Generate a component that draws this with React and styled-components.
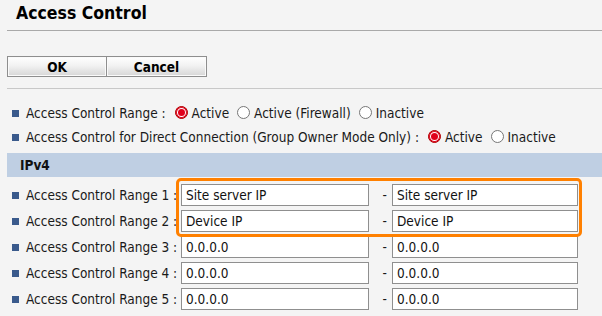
import React from "react";
import styled, { createGlobalStyle } from "styled-components";

const GlobalStyle = createGlobalStyle`
  body {
    margin: 0;
    background: #f4f4f4;
    font-family: "DejaVu Sans Condensed", "DejaVu Sans", sans-serif;
    color: #1a1a1a;
  }
`;

const ranges = [
  { from: "Site server IP", to: "Site server IP" },
  { from: "Device IP", to: "Device IP" },
  { from: "0.0.0.0", to: "0.0.0.0" },
  { from: "0.0.0.0", to: "0.0.0.0" },
  { from: "0.0.0.0", to: "0.0.0.0" },
];

function Radio({ checked, label }) {
  return (
    <Choice>
      <RadioDot $checked={checked} />
      {label}
    </Choice>
  );
}

function App() {
  return (
    <>
      <GlobalStyle />
      <Page>
        <Title>Access Control</Title>
        <Buttons>
          <Button>OK</Button>
          <Button>Cancel</Button>
        </Buttons>
        <Divider />

        <Settings>
          <OptionRow>
            <Bullet />
            <OptionName>Access Control Range :</OptionName>
            <Radio checked label="Active" />
            <Radio label="Active (Firewall)" />
            <Radio label="Inactive" />
          </OptionRow>
          <OptionRow>
            <Bullet />
            <OptionName>Access Control for Direct Connection (Group Owner Mode Only) :</OptionName>
            <Radio checked label="Active" />
            <Radio label="Inactive" />
          </OptionRow>
        </Settings>

        <Band>IPv4</Band>

        <RangeList>
          <Highlight />
          {ranges.map((r, i) => (
            <RangeRow key={i}>
              <Label>
                <Bullet />
                Access Control Range {i + 1} :
              </Label>
              <Field defaultValue={r.from} />
              <Dash>-</Dash>
              <Field defaultValue={r.to} />
            </RangeRow>
          ))}
        </RangeList>
      </Page>
    </>
  );
}

const Page = styled.div`
  padding-left: 7px;
  font-size: 13.5px;
`;

const Title = styled.h1`
  margin: 0;
  height: 30px;
  line-height: 27px;
  padding-left: 9px;
  font-size: 17.5px;
  font-weight: bold;
  color: #000;
  border-bottom: 1px solid #a9a9a9;
`;

const Buttons = styled.div`
  display: flex;
  margin-top: 25px;
`;

const Button = styled.button`
  width: 100px;
  height: 21px;
  padding: 0;
  border: 1px solid #8e8e8e;
  background: linear-gradient(#ffffff 0%, #f2f2f2 45%, #d6d6d6 100%);
  box-shadow: inset 0 0 0 1px #fafafa;
  font-family: inherit;
  font-size: 13.5px;
  font-weight: bold;
  color: #000;
  & + & {
    border-left: none;
  }
`;

const Divider = styled.div`
  margin-top: 11px;
  height: 1px;
  background: #c8c8c8;
`;

const Settings = styled.div`
  padding: 12px 0 4px 5px;
`;

const OptionRow = styled.div`
  display: flex;
  align-items: center;
  height: 24px;
  white-space: nowrap;
`;

const OptionName = styled.span`
  margin-right: 9px;
`;

const Bullet = styled.i`
  display: inline-block;
  width: 7px;
  height: 7px;
  background: #3a5a8c;
  margin-right: 7px;
  flex-shrink: 0;
`;

const Choice = styled.label`
  display: inline-flex;
  align-items: center;
  margin-right: 8px;
`;

const RadioDot = styled.i`
  display: inline-block;
  width: 13px;
  height: 13px;
  box-sizing: border-box;
  border-radius: 50%;
  margin-right: 4px;
  margin-bottom: 1px;
  border: 1px solid ${(p) => (p.$checked ? "#b00000" : "#767676")};
  background: ${(p) => (p.$checked ? "#e0001b" : "#fff")};
  box-shadow: ${(p) => (p.$checked ? "inset 0 0 0 1px #e0001b, inset 0 0 0 2px #fff" : "none")};
`;

const Band = styled.div`
  height: 24px;
  line-height: 24px;
  padding-left: 13px;
  background: #bfcfe3;
  font-weight: bold;
  color: #111;
`;

const RangeList = styled.div`
  position: relative;
  display: flex;
  flex-direction: column;
  gap: 4px;
  padding: 7px 0 0 5px;
`;

const Highlight = styled.div`
  position: absolute;
  left: 169px;
  top: 1px;
  width: 400px;
  height: 53px;
  border: 3px solid #ff8000;
  border-radius: 5px;
  pointer-events: none;
  z-index: 1;
`;

const RangeRow = styled.div`
  display: grid;
  grid-template-columns: 169px 188px 23px 186px;
  align-items: center;
  height: 22px;
`;

const Label = styled.div`
  display: flex;
  align-items: center;
  white-space: nowrap;
`;

const Field = styled.input`
  box-sizing: border-box;
  height: 22px;
  width: 100%;
  margin: 0;
  padding: 0 4px;
  border: 1px solid #8f8f8f;
  background: #fff;
  font-family: inherit;
  font-size: 13.5px;
  color: #111;
  outline: none;
`;

const Dash = styled.span`
  text-align: right;
  padding-right: 5px;
`;

export default App;
